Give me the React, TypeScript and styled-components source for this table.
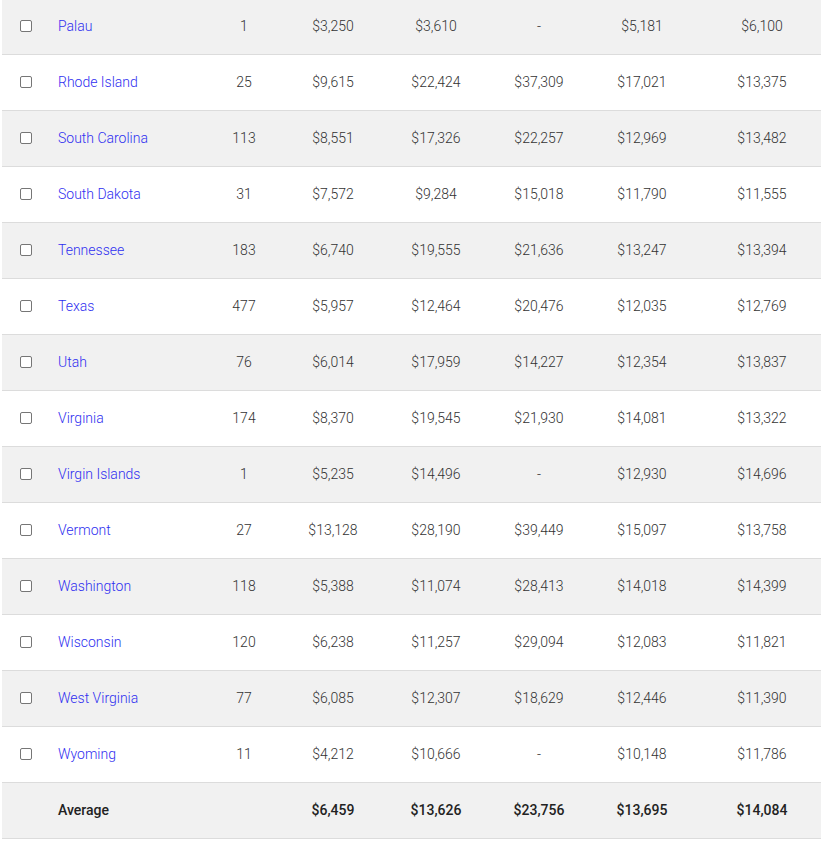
import React from "react";
import styled, { createGlobalStyle } from "styled-components";

const GlobalStyle = createGlobalStyle`
  html, body { margin: 0; padding: 0; background: #ffffff; }
  body { font-family: Roboto, "Noto Sans", "Liberation Sans", sans-serif; }
`;

const Wrapper = styled.div`
  padding: 0 2px;
  margin-top: -2px;
`;

const Table = styled.table`
  width: 819px;
  border-collapse: collapse;
  table-layout: fixed;
  font-size: 14px;
  color: #333333;
`;

const Row = styled.tr<{ $shaded: boolean }>`
  background: ${(p) => (p.$shaded ? "#f1f1f1" : "#ffffff")};
  border-bottom: 1px solid #dcdcdc;
`;

const Cell = styled.td<{ $bold?: boolean; $shift?: number }>`
  height: 56px;
  padding: 0 0 0 ${(p) => p.$shift ?? 0}px;
  text-align: center;
  vertical-align: middle;
  font-weight: ${(p) => (p.$bold ? 500 : 300)};
  color: ${(p) => (p.$bold ? "#222222" : "#333333")};
  box-sizing: border-box;
`;

const NameCell = styled.td<{ $bold?: boolean }>`
  height: 56px;
  padding: 0 0 0 12px;
  text-align: left;
  vertical-align: middle;
  font-weight: ${(p) => (p.$bold ? 500 : 300)};
  color: #222222;
  box-sizing: border-box;
`;

const CheckCell = styled.td`
  height: 56px;
  padding: 0 0 0 18px;
  vertical-align: middle;
  box-sizing: border-box;
`;

const Check = styled.span`
  display: block;
  width: 12px;
  height: 12px;
  box-sizing: border-box;
  border: 1.5px solid #767676;
  border-radius: 2px;
  background: #ffffff;
`;

const Link = styled.a`
  color: #2f2ff0;
  text-decoration: none;
`;

type R = [string, string, string, string, string, string, string];

const rows: R[] = [
  ["Palau", "1", "$3,250", "$3,610", "-", "$5,181", "$6,100"],
  ["Rhode Island", "25", "$9,615", "$22,424", "$37,309", "$17,021", "$13,375"],
  ["South Carolina", "113", "$8,551", "$17,326", "$22,257", "$12,969", "$13,482"],
  ["South Dakota", "31", "$7,572", "$9,284", "$15,018", "$11,790", "$11,555"],
  ["Tennessee", "183", "$6,740", "$19,555", "$21,636", "$13,247", "$13,394"],
  ["Texas", "477", "$5,957", "$12,464", "$20,476", "$12,035", "$12,769"],
  ["Utah", "76", "$6,014", "$17,959", "$14,227", "$12,354", "$13,837"],
  ["Virginia", "174", "$8,370", "$19,545", "$21,930", "$14,081", "$13,322"],
  ["Virgin Islands", "1", "$5,235", "$14,496", "-", "$12,930", "$14,696"],
  ["Vermont", "27", "$13,128", "$28,190", "$39,449", "$15,097", "$13,758"],
  ["Washington", "118", "$5,388", "$11,074", "$28,413", "$14,018", "$14,399"],
  ["Wisconsin", "120", "$6,238", "$11,257", "$29,094", "$12,083", "$11,821"],
  ["West Virginia", "77", "$6,085", "$12,307", "$18,629", "$12,446", "$11,390"],
  ["Wyoming", "11", "$4,212", "$10,666", "-", "$10,148", "$11,786"],
];

const average = ["$6,459", "$13,626", "$23,756", "$13,695", "$14,084"];

const widths = [44, 154, 88, 90, 116, 90, 116, 121];

export default function App() {
  return (
    <>
      <GlobalStyle />
      <Wrapper>
        <Table>
          <colgroup>
            {widths.map((w, i) => (
              <col key={i} style={{ width: w }} />
            ))}
          </colgroup>
          <tbody>
            {rows.map((r, i) => (
              <Row key={r[0]} $shaded={i % 2 === 0}>
                <CheckCell>
                  <Check />
                </CheckCell>
                <NameCell>
                  <Link href="#">{r[0]}</Link>
                </NameCell>
                {r.slice(1).map((v, j) => (
                  <Cell key={j} $shift={j === 5 ? 3 : 0}>
                    {v}
                  </Cell>
                ))}
              </Row>
            ))}
            <Row $shaded>
              <CheckCell />
              <NameCell $bold>Average</NameCell>
              <Cell />
              {average.map((v, j) => (
                <Cell key={j} $bold $shift={j === 4 ? 3 : 0}>
                  {v}
                </Cell>
              ))}
            </Row>
          </tbody>
        </Table>
      </Wrapper>
    </>
  );
}
